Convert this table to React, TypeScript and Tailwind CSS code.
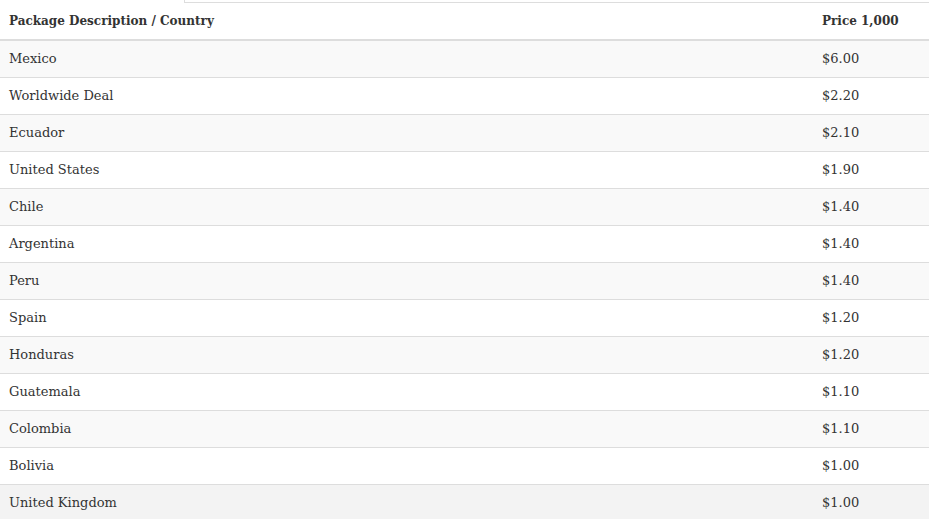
import React from "react";

const rows = [
  ["Mexico", "$6.00"],
  ["Worldwide Deal", "$2.20"],
  ["Ecuador", "$2.10"],
  ["United States", "$1.90"],
  ["Chile", "$1.40"],
  ["Argentina", "$1.40"],
  ["Peru", "$1.40"],
  ["Spain", "$1.20"],
  ["Honduras", "$1.20"],
  ["Guatemala", "$1.10"],
  ["Colombia", "$1.10"],
  ["Bolivia", "$1.00"],
  ["United Kingdom", "$1.00"],
];

const App = () => {
  return (
    <div className="w-[929px] h-[519px] overflow-hidden bg-white font-['DejaVu_Serif',serif] text-[#333]">
      <div className="flex h-[3px]">
        <div className="w-[184px] shrink-0" />
        <div className="flex-1 border-l border-b border-[#ddd]" />
      </div>
      <table className="w-full border-collapse text-left text-[13px] leading-5">
        <thead>
          <tr className="border-b-2 border-[#ddd]">
            <th className="h-[37px] pl-[9px] pr-2 text-[12px] font-bold">Package Description / Country</th>
            <th className="w-[115px] px-2 text-[12px] font-bold">Price 1,000</th>
          </tr>
        </thead>
        <tbody>
          {rows.map(([country, price], i) => (
            <tr
              key={country}
              className={
                i === rows.length - 1
                  ? "border-t border-[#ddd] bg-[#f3f3f3]"
                  : i % 2 === 0
                  ? "border-t border-[#ddd] bg-[#f9f9f9]"
                  : "border-t border-[#ddd] bg-white"
              }
            >
              <td className="h-[37px] pl-[9px] pr-2 font-normal">{country}</td>
              <td className="px-2">{price}</td>
            </tr>
          ))}
        </tbody>
      </table>
    </div>
  );
};

export default App;
